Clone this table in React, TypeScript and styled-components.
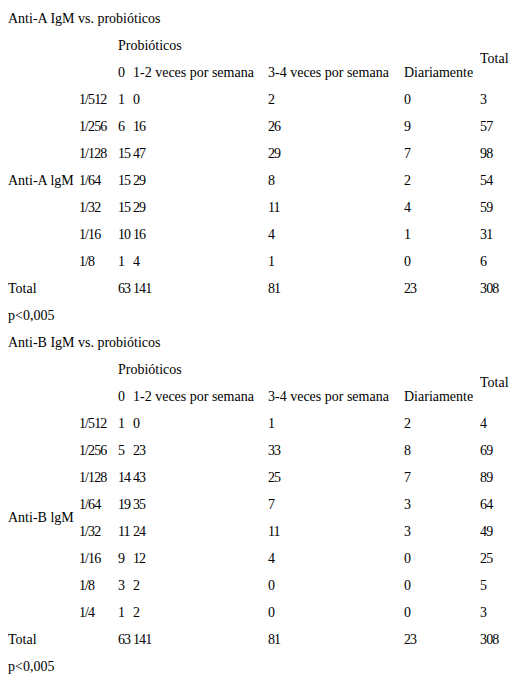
import React from "react";
import styled, { createGlobalStyle } from "styled-components";

const GlobalStyle = createGlobalStyle`
  html, body {
    margin: 0;
    padding: 0;
    background: #ffffff;
  }
  body {
    font-family: "Liberation Serif", "Times New Roman", serif;
    font-size: 14px;
    color: #000000;
  }
`;

const Page = styled.div`
  padding: 5px 0 0 8px;
`;

const Line = styled.div`
  height: 27px;
  line-height: 27px;
  white-space: nowrap;
`;

const Table = styled.table`
  border-collapse: collapse;
  table-layout: fixed;
  width: 502px;
`;

const Col = styled.col<{ $w: number }>`
  width: ${(p) => p.$w}px;
`;

// cells; numbers are drawn a little tighter, as in the source rendering
const Cell = styled.td<{ $num?: boolean }>`
  height: 27px;
  padding: 0;
  line-height: 16px;
  text-align: left;
  vertical-align: middle;
  white-space: nowrap;
  overflow: visible;
  letter-spacing: ${(p) => (p.$num ? "-0.9px" : "normal")};
`;

const COLS = [71, 39, 15, 135, 136, 76, 30];

type Row = [string, number, number, number, number, number];

const tableA: Row[] = [
  ["1/512", 1, 0, 2, 0, 3],
  ["1/256", 6, 16, 26, 9, 57],
  ["1/128", 15, 47, 29, 7, 98],
  ["1/64", 15, 29, 8, 2, 54],
  ["1/32", 15, 29, 11, 4, 59],
  ["1/16", 10, 16, 4, 1, 31],
  ["1/8", 1, 4, 1, 0, 6],
];

const tableB: Row[] = [
  ["1/512", 1, 0, 1, 2, 4],
  ["1/256", 5, 23, 33, 8, 69],
  ["1/128", 14, 43, 25, 7, 89],
  ["1/64", 19, 35, 7, 3, 64],
  ["1/32", 11, 24, 11, 3, 49],
  ["1/16", 9, 12, 4, 0, 25],
  ["1/8", 3, 2, 0, 0, 5],
  ["1/4", 1, 2, 0, 0, 3],
];

interface CrossTabProps {
  title: string;
  rowLabel: string;
  rows: Row[];
  totals: number[];
}

const CrossTab: React.FC<CrossTabProps> = ({ title, rowLabel, rows, totals }) => (
  <>
    <Line>{title}</Line>
    <Table>
      <colgroup>
        {COLS.map((w, i) => (
          <Col key={i} $w={w} />
        ))}
      </colgroup>
      <tbody>
        <tr>
          <Cell />
          <Cell />
          <Cell colSpan={4}>Probióticos</Cell>
          <Cell rowSpan={2}>Total</Cell>
        </tr>
        <tr>
          <Cell />
          <Cell />
          <Cell $num>0</Cell>
          <Cell>1-2 veces por semana</Cell>
          <Cell>3-4 veces por semana</Cell>
          <Cell>Diariamente</Cell>
        </tr>
        {rows.map((r, i) => (
          <tr key={r[0]}>
            {i === 0 && <Cell rowSpan={rows.length}>{rowLabel}</Cell>}
            {r.map((v, j) => (
              <Cell key={j} $num>
                {v}
              </Cell>
            ))}
          </tr>
        ))}
        <tr>
          <Cell colSpan={2}>Total</Cell>
          {totals.map((v, j) => (
            <Cell key={j} $num>
              {v}
            </Cell>
          ))}
        </tr>
      </tbody>
    </Table>
    <Line>p&lt;0,005</Line>
  </>
);

export default function App() {
  return (
    <Page>
      <GlobalStyle />
      <CrossTab
        title="Anti-A IgM vs. probióticos"
        rowLabel="Anti-A lgM"
        rows={tableA}
        totals={[63, 141, 81, 23, 308]}
      />
      <CrossTab
        title="Anti-B IgM vs. probióticos"
        rowLabel="Anti-B lgM"
        rows={tableB}
        totals={[63, 141, 81, 23, 308]}
      />
    </Page>
  );
}
